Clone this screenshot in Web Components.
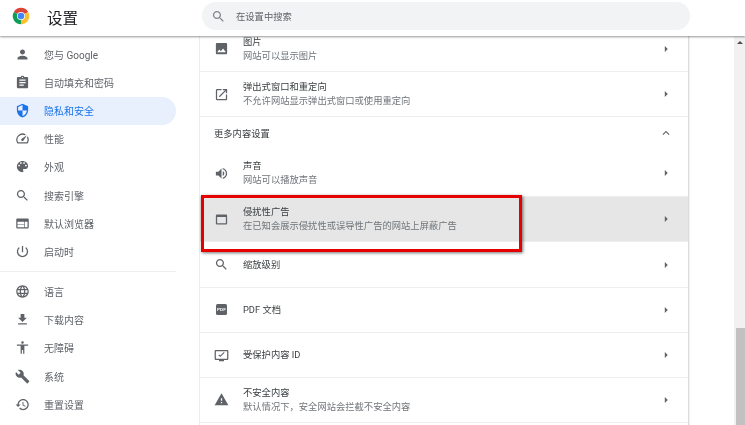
<!DOCTYPE html>
<html lang="zh">
<head>
<meta charset="utf-8">
<title>设置</title>
<style>
	html, body { margin: 0; height: 100%; overflow: hidden; background: #fff; }
	body { font-family: Roboto, "Noto Sans CJK SC", sans-serif; }
</style>
</head>
<body>
<settings-page>
	<settings-header slot="header"></settings-header>
	<settings-nav slot="nav">
		<nav-item icon="person">您与 Google</nav-item>
		<nav-item icon="assignment">自动填充和密码</nav-item>
		<nav-item icon="shield" active>隐私和安全</nav-item>
		<nav-item icon="speed">性能</nav-item>
		<nav-item icon="palette">外观</nav-item>
		<nav-item icon="search">搜索引擎</nav-item>
		<nav-item icon="web">默认浏览器</nav-item>
		<nav-item icon="power">启动时</nav-item>
		<nav-divider></nav-divider>
		<nav-item icon="language">语言</nav-item>
		<nav-item icon="download">下载内容</nav-item>
		<nav-item icon="accessibility">无障碍</nav-item>
		<nav-item icon="build">系统</nav-item>
		<nav-item icon="restore">重置设置</nav-item>
	</settings-nav>
	<settings-card slot="main">
		<settings-row icon="image" label="图片" sub="网站可以显示图片"></settings-row>
		<settings-row icon="open" label="弹出式窗口和重定向" sub="不允许网站显示弹出式窗口或使用重定向"></settings-row>
		<section-heading>更多内容设置</section-heading>
		<settings-row icon="volume" label="声音" sub="网站可以播放声音" noborder></settings-row>
		<settings-row icon="ads" label="侵扰性广告" sub="在已知会展示侵扰性或误导性广告的网站上屏蔽广告" hot></settings-row>
		<settings-row icon="search" label="缩放级别"></settings-row>
		<settings-row icon="pdf" label="PDF 文档"></settings-row>
		<settings-row icon="protected" label="受保护内容 ID"></settings-row>
		<settings-row icon="warning" label="不安全内容" sub="默认情况下，安全网站会拦截不安全内容"></settings-row>
	</settings-card>
	<fake-scrollbar slot="scroll"></fake-scrollbar>
	<red-callout slot="callout"></red-callout>
</settings-page>

<script>
// material icon paths, all on a 24 box
const ICONS = {
	person: "M12 12c2.21 0 4-1.79 4-4s-1.79-4-4-4-4 1.79-4 4 1.79 4 4 4zm0 2c-2.67 0-8 1.34-8 4v2h16v-2c0-2.66-5.33-4-8-4z",
	assignment: "M19 3h-4.18C14.4 1.84 13.3 1 12 1c-1.3 0-2.4.84-2.82 2H5c-1.1 0-2 .9-2 2v14c0 1.1.9 2 2 2h14c1.1 0 2-.9 2-2V5c0-1.1-.9-2-2-2zm-7 0c.55 0 1 .45 1 1s-.45 1-1 1-1-.45-1-1 .45-1 1-1zm2 14H7v-2h7v2zm3-4H7v-2h10v2zm0-4H7V7h10v2z",
	shield: "M12 1L3 5v6c0 5.55 3.84 10.74 9 12 5.16-1.26 9-6.45 9-12V5l-9-4zm0 10.99h7c-.53 4.12-3.28 7.79-7 8.94V12H5V6.3l7-3.11v8.8z",
	speed: "M20.38 8.57l-1.23 1.85a8 8 0 0 1-.22 7.58H5.07A8 8 0 0 1 15.58 6.85l1.85-1.23A10 10 0 0 0 3.35 19a2 2 0 0 0 1.72 1h13.85a2 2 0 0 0 1.74-1 10 10 0 0 0-.27-10.44zm-9.79 6.84a2 2 0 0 0 2.83 0l5.66-8.49-8.49 5.66a2 2 0 0 0 0 2.83z",
	palette: "M12 3c-4.97 0-9 4.03-9 9s4.03 9 9 9c.83 0 1.5-.67 1.5-1.5 0-.39-.15-.74-.39-1.01-.23-.26-.38-.61-.38-.99 0-.83.67-1.5 1.5-1.5H16c2.76 0 5-2.24 5-5 0-4.42-4.03-8-9-8zm-5.5 9c-.83 0-1.5-.67-1.5-1.5S5.67 9 6.5 9 8 9.67 8 10.5 7.33 12 6.5 12zm3-4C8.67 8 8 7.33 8 6.5S8.67 5 9.5 5s1.5.67 1.5 1.5S10.33 8 9.5 8zm5 0c-.83 0-1.5-.67-1.5-1.5S13.67 5 14.5 5s1.5.67 1.5 1.5S15.33 8 14.5 8zm3 4c-.83 0-1.5-.67-1.5-1.5S16.67 9 17.5 9s1.5.67 1.5 1.5-.67 1.5-1.5 1.5z",
	search: "M15.5 14h-.79l-.28-.27C15.41 12.59 16 11.11 16 9.5 16 5.91 13.09 3 9.5 3S3 5.91 3 9.5 5.91 16 9.5 16c1.61 0 3.09-.59 4.23-1.57l.27.28v.79l5 4.99L20.49 19l-4.99-5zm-6 0C7.01 14 5 11.99 5 9.5S7.01 5 9.5 5 14 7.01 14 9.5 11.99 14 9.5 14z",
	web: "M20 4H4c-1.1 0-1.99.9-1.99 2L2 18c0 1.1.9 2 2 2h16c1.1 0 2-.9 2-2V6c0-1.1-.9-2-2-2zm-5 14H4v-4h11v4zm0-5H4V9h11v4zm5 5h-4V9h4v9z",
	power: "M13 3h-2v10h2V3zm4.83 2.17l-1.42 1.42C17.99 7.86 19 9.81 19 12c0 3.87-3.13 7-7 7s-7-3.13-7-7c0-2.19 1.01-4.14 2.58-5.42L6.17 5.17C4.23 6.82 3 9.26 3 12c0 4.97 4.03 9 9 9s9-4.03 9-9c0-2.74-1.23-5.18-3.17-6.83z",
	language: "M11.99 2C6.47 2 2 6.48 2 12s4.47 10 9.99 10C17.52 22 22 17.52 22 12S17.52 2 11.99 2zm6.93 6h-2.95c-.32-1.25-.78-2.45-1.38-3.56 1.84.63 3.37 1.91 4.33 3.56zM12 4.04c.83 1.2 1.48 2.53 1.91 3.96h-3.82c.43-1.43 1.08-2.76 1.91-3.96zM4.26 14C4.1 13.36 4 12.69 4 12s.1-1.36.26-2h3.38c-.08.66-.14 1.32-.14 2 0 .68.06 1.34.14 2H4.26zm.82 2h2.95c.32 1.25.78 2.45 1.38 3.56-1.84-.63-3.37-1.9-4.33-3.56zm2.95-8H5.08c.96-1.66 2.49-2.93 4.33-3.56C8.81 5.55 8.35 6.75 8.03 8zM12 19.96c-.83-1.2-1.48-2.53-1.91-3.96h3.82c-.43 1.43-1.08 2.76-1.91 3.96zM14.34 14H9.66c-.09-.66-.16-1.32-.16-2 0-.68.07-1.35.16-2h4.68c.09.65.16 1.32.16 2 0 .68-.07 1.34-.16 2zm.25 5.56c.6-1.11 1.06-2.31 1.38-3.56h2.95c-.96 1.65-2.49 2.93-4.33 3.56zM16.36 14c.08-.66.14-1.32.14-2 0-.68-.06-1.34-.14-2h3.38c.16.64.26 1.31.26 2s-.1 1.36-.26 2h-3.38z",
	download: "M19 9h-4V3H9v6H5l7 7 7-7zM5 18v2h14v-2H5z",
	accessibility: "M12 2c1.1 0 2 .9 2 2s-.9 2-2 2-2-.9-2-2 .9-2 2-2zm9 7h-6v13h-2v-6h-2v6H9V9H3V7h18v2z",
	build: "M22.7 19l-9.1-9.1c.9-2.3.4-5-1.5-6.9-2-2-5-2.4-7.4-1.3L9 6 6 9 1.6 4.7C.4 7.1.9 10.1 2.9 12.1c1.9 1.9 4.6 2.4 6.9 1.5l9.1 9.1c.4.4 1 .4 1.4 0l2.3-2.3c.5-.4.5-1.1.1-1.4z",
	restore: "M13 3c-4.97 0-9 4.03-9 9H1l3.89 3.89.07.14L9 12H6c0-3.87 3.13-7 7-7s7 3.13 7 7-3.13 7-7 7c-1.93 0-3.68-.79-4.94-2.06l-1.42 1.42C8.27 19.99 10.51 21 13 21c4.97 0 9-4.03 9-9s-4.03-9-9-9zm-1 5v5l4.28 2.54.72-1.21-3.5-2.08V8H12z",
	image: "M21 19V5c0-1.1-.9-2-2-2H5c-1.1 0-2 .9-2 2v14c0 1.1.9 2 2 2h14c1.1 0 2-.9 2-2zM8.5 13.5l2.5 3.01L14.5 12l4.5 6H5l3.5-4.5z",
	open: "M19 19H5V5h7V3H5a2 2 0 0 0-2 2v14a2 2 0 0 0 2 2h14c1.1 0 2-.9 2-2v-7h-2v7zM14 3v2h3.59l-9.83 9.83 1.41 1.41L19 6.41V10h2V3h-7z",
	volume: "M3 9v6h4l5 5V4L7 9H3zm13.5 3c0-1.77-1.02-3.29-2.5-4.03v8.05c1.48-.73 2.5-2.25 2.5-4.02zM14 3.23v2.06c2.89.86 5 3.54 5 6.71s-2.11 5.85-5 6.71v2.06c4.01-.91 7-4.49 7-8.77s-2.99-7.86-7-8.77z",
	ads: "M19 4H5c-1.11 0-2 .9-2 2v12c0 1.1.89 2 2 2h14c1.1 0 2-.9 2-2V6c0-1.1-.89-2-2-2zm0 14H5V8h14v10z",
	protected: "M21 3H3c-1.1 0-2 .9-2 2v12c0 1.1.9 2 2 2h5v2h8v-2h5c1.1 0 2-.9 2-2V5c0-1.1-.9-2-2-2zm0 14H3V5h18v12zM10 14.5l-3-3 1.2-1.2 1.8 1.8 5.8-5.8L17 7.5z",
	warning: "M1 21h22L12 2 1 21zm12-3h-2v-2h2v2zm0-4h-2v-4h2v4z",
	arrow: "M10 17l5-5-5-5v10z",
	less: "M12 8l-6 6 1.41 1.41L12 10.83l4.59 4.58L18 14z"
};

function svgIcon(name, size, color) {
	return `<svg width="${size}" height="${size}" viewBox="0 0 24 24" fill="${color}" style="display:block;flex:none"><path d="${ICONS[name]}"/></svg>`;
}

// page frame: header on top, then nav / main / scrollbar
class SettingsPage extends HTMLElement {
	constructor() {
		super();
		this.attachShadow({ mode: "open" });
		this.shadowRoot.innerHTML = `
		<style>
			:host { display: grid; grid-template-columns: 199px 1fr 11px; grid-template-rows: 36px 1fr; width: 745px; height: 425px; overflow: hidden; position: relative; color: #202124; filter: blur(.35px); }
			.head { grid-column: 1 / 4; position: relative; z-index: 2; box-shadow: 0 1px 2px rgba(60,64,67,.55); background: #fff; }
			.main { overflow: hidden; min-height: 0; }
		</style>
		<div class="head"><slot name="header"></slot></div>
		<slot name="nav"></slot>
		<div class="main"><slot name="main"></slot></div>
		<slot name="scroll"></slot>
		<slot name="callout"></slot>`;
	}
}

class SettingsHeader extends HTMLElement {
	constructor() {
		super();
		this.attachShadow({ mode: "open" });
		this.shadowRoot.innerHTML = `
		<style>
			:host { display: flex; align-items: center; height: 32px; }
			.logo { margin-left: 12px; width: 18px; height: 18px; display: block; flex: none; }
			h1 { margin: 1px 0 0 17px; width: 155px; font-size: 15.5px; font-weight: 400; color: #202124; flex: none; }
			.search { display: flex; align-items: center; width: 488px; height: 28px; border-radius: 14px; background: #f1f3f4; flex: none; }
			.search svg { margin-left: 9px; }
			.search span { margin-left: 10px; font-size: 9.3px; color: #5f6368; }
		</style>
		<svg class="logo" viewBox="0 0 24 24">
			<path fill="#db4437" d="M12 12L2.47 6.5A11 11 0 0 1 21.53 6.5z"/>
			<path fill="#fbc02d" d="M12 12L21.53 6.5A11 11 0 0 1 12 23z"/>
			<path fill="#0f9d58" d="M12 12L12 23A11 11 0 0 1 2.47 6.5z"/>
			<circle cx="12" cy="12" r="5.4" fill="#fff"/>
			<circle cx="12" cy="12" r="4.4" fill="#4285f4"/>
		</svg>
		<h1>设置</h1>
		<div class="search">${svgIcon("search", 15, "#80868b")}<span>在设置中搜索</span></div>`;
	}
}

class SettingsNav extends HTMLElement {
	constructor() {
		super();
		this.attachShadow({ mode: "open" });
		this.shadowRoot.innerHTML = `
		<style>
			:host { display: flex; flex-direction: column; padding-top: 4.5px; width: 176px; }
		</style>
		<slot></slot>`;
	}
}

class NavItem extends HTMLElement {
	constructor() {
		super();
		this.attachShadow({ mode: "open" });
		const on = this.hasAttribute("active");
		const color = on ? "#1a73e8" : "#5f6368";
		this.shadowRoot.innerHTML = `
		<style>
			:host { display: flex; align-items: center; height: 28.1px; flex: none; font-size: 10px; color: ${color}; ${on ? "background:#e8f0fe;border-radius:0 14px 14px 0;" : ""} }
			svg { margin-left: 14.5px; margin-right: 14.5px; }
		</style>
		${svgIcon(this.getAttribute("icon"), 15, on ? "#1a73e8" : "#5f6368")}<slot></slot>`;
	}
}

class NavDivider extends HTMLElement {
	constructor() {
		super();
		this.attachShadow({ mode: "open" });
		this.shadowRoot.innerHTML = `
		<style>
			:host { display: block; height: 1px; margin: 6px 0 5.5px; background: #eee; flex: none; }
		</style>`;
	}
}

// the white card, scrolled so the first row is cut by the header
class SettingsCard extends HTMLElement {
	constructor() {
		super();
		this.attachShadow({ mode: "open" });
		this.shadowRoot.innerHTML = `
		<style>
			:host { display: flex; flex-direction: column; width: 488px; margin: -10.3px 0 0 1px; padding-bottom: 40px; background: #fff; box-shadow: 0 0 2px rgba(60,64,67,.3), 1px 0 2px rgba(60,64,67,.15); }
		</style>
		<slot></slot>`;
	}
}

class SettingsRow extends HTMLElement {
	constructor() {
		super();
		this.attachShadow({ mode: "open" });
		const sub = this.getAttribute("sub");
		const name = this.getAttribute("icon");
		const pic = name === "pdf"
			? `<span class="pdf">PDF</span>`
			: svgIcon(name, 15, "#5f6368");
		this.shadowRoot.innerHTML = `
		<style>
			:host { display: flex; align-items: center; height: 45.3px; flex: none; box-sizing: border-box; font-size: 9.3px; line-height: 14px; padding: 0 15px 0 13px; ${this.hasAttribute("noborder") ? "" : "border-top: 1px solid #eee;"} ${this.hasAttribute("hot") ? "background:#e6e6e6;" : ""} }
			:host(:last-child) { border-bottom: 1px solid #eee; }
			.ic { width: 17px; display: flex; justify-content: center; margin-right: 13px; flex: none; }
			.pdf { width: 11px; height: 11px; border-radius: 1.5px; background: #5f6368; color: #fff; font: 700 4.4px/11px "Liberation Sans", sans-serif; text-align: center; }
			.txt { flex: 1; }
			.l { color: #3c4043; }
			.s { color: #70757a; }
		</style>
		<div class="ic">${pic}</div>
		<div class="txt"><div class="l">${this.getAttribute("label")}</div>${sub ? `<div class="s">${sub}</div>` : ""}</div>
		${svgIcon("arrow", 14, "#5f6368")}`;
	}
}

class SectionHeading extends HTMLElement {
	constructor() {
		super();
		this.attachShadow({ mode: "open" });
		this.shadowRoot.innerHTML = `
		<style>
			:host { display: flex; align-items: center; justify-content: space-between; height: 34.5px; flex: none; box-sizing: border-box; border-top: 1px solid #eee; padding: 0 15px 1.5px 14px; font-size: 9.3px; color: #3c4043; }
		</style>
		<span><slot></slot></span>${svgIcon("less", 14, "#5f6368")}`;
	}
}

class FakeScrollbar extends HTMLElement {
	constructor() {
		super();
		this.attachShadow({ mode: "open" });
		this.shadowRoot.innerHTML = `
		<style>
			:host { display: flex; flex-direction: column; background: #f1f1f1; min-height: 0; }
			.up { width: 0; height: 0; margin: 5px auto 0; border: 3px solid transparent; border-top: 0; border-bottom: 3px solid #505050; }
			.gap { flex: 1; }
			.thumb { height: 97px; margin-left: 2px; background: #c1c1c1; }
		</style>
		<div class="up"></div><div class="gap"></div><div class="thumb"></div>`;
	}
}

// red annotation drawn over the screenshot
class RedCallout extends HTMLElement {
	constructor() {
		super();
		this.attachShadow({ mode: "open" });
		this.shadowRoot.innerHTML = `
		<style>
			:host { position: absolute; left: 201px; top: 195px; width: 321px; height: 57px; box-sizing: border-box; border: 3px solid #e60000; box-shadow: 1px 1px 3px rgba(0,0,0,.55); z-index: 3; pointer-events: none; }
		</style>`;
	}
}

customElements.define("settings-page", SettingsPage);
customElements.define("settings-header", SettingsHeader);
customElements.define("settings-nav", SettingsNav);
customElements.define("nav-item", NavItem);
customElements.define("nav-divider", NavDivider);
customElements.define("settings-card", SettingsCard);
customElements.define("settings-row", SettingsRow);
customElements.define("section-heading", SectionHeading);
customElements.define("fake-scrollbar", FakeScrollbar);
customElements.define("red-callout", RedCallout);
</script>
</body>
</html>
